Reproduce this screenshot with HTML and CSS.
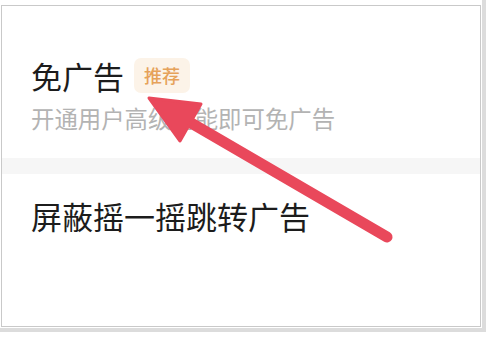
FILE: index.html
```html
<!DOCTYPE html>
<html lang="zh-CN">
<head>
<meta charset="utf-8">
<title>免广告</title>
<link rel="stylesheet" href="styles.css">
</head>
<body>
<div class="shot">
  <div class="frame">
    <section class="item item-first">
      <div class="title-row">
        <span class="title">免广告</span>
        <span class="badge">推荐</span>
      </div>
      <div class="subtitle">开通用户高级功能即可免广告</div>
    </section>
    <div class="divider"></div>
    <section class="item item-second">
      <div class="title">屏蔽摇一摇跳转广告</div>
    </section>
  </div>
  <svg class="arrow" width="492" height="338" viewBox="0 0 492 338" aria-hidden="true">
    <line x1="186" y1="120" x2="387" y2="237" stroke="#e9485b" stroke-width="11" stroke-linecap="round"/>
    <polygon points="149,98 201,104 180,141" fill="#e9485b" stroke="#e9485b" stroke-width="3" stroke-linejoin="round"/>
  </svg>
</div>
</body>
</html>
```

FILE: styles.css
```css
html, body {
  margin: 0;
  padding: 0;
  background: #ffffff;
}

body {
  font-family: "Noto Sans CJK SC", "Noto Sans", sans-serif;
  width: 492px;
  height: 338px;
  overflow: hidden;
}

.shot {
  position: relative;
  width: 486px;
  height: 332px;
  box-sizing: border-box;
  padding: 5px 6px 5px 1px;
  border-right: 4px solid #dcdcdc;
  border-bottom: 4px solid #dcdcdc;
}

.frame {
  width: 480px;
  height: 322px;
  box-sizing: border-box;
  border: 1px solid #c9c9c9;
  background: #ffffff;
  display: flex;
  flex-direction: column;
}

.item {
  padding-left: 29px;
}

.item-first {
  padding-top: 52px;
  padding-bottom: 28px;
}

.item-second {
  padding-top: 26px;
}

.title-row {
  display: flex;
  align-items: center;
  gap: 10px;
}

.title {
  font-size: 31px;
  line-height: 31px;
  color: #1c1c1c;
}

.badge {
  height: 35px;
  padding: 0 10px;
  border-radius: 7px;
  background: #fcf3e8;
  color: #e6a25a;
  font-size: 18px;
  line-height: 35px;
  font-weight: 500;
}

.subtitle {
  margin-top: 13px;
  font-size: 23.4px;
  line-height: 24px;
  color: #b3b3b3;
}

.divider {
  height: 16px;
  background: #f6f6f6;
}

.arrow {
  position: absolute;
  left: 0;
  top: 0;
  pointer-events: none;
}
```
